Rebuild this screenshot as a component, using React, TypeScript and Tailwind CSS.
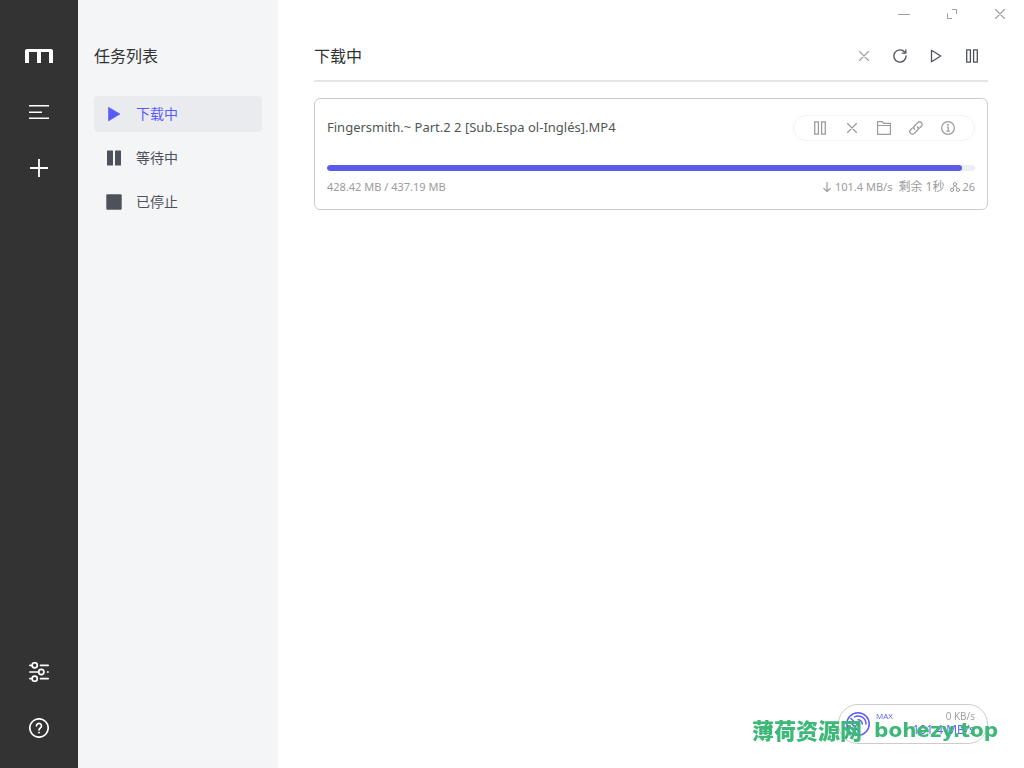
import React, { useState } from 'react'
import clsx from 'clsx'

type IconProps = { className?: string }

const stroke = {
  fill: 'none',
  stroke: 'currentColor',
  strokeLinecap: 'round' as const,
  strokeLinejoin: 'round' as const,
}

const LogoIcon = () => (
  <svg width="28" height="14" viewBox="0 0 28 14" fill="currentColor">
    <path d="M2 0h24a2 2 0 0 1 2 2v12h-4V3h-8v11h-4V3H4v11H0V2a2 2 0 0 1 2-2z" />
  </svg>
)

const MenuIcon = () => (
  <svg width="20" height="16" viewBox="0 0 20 16" {...stroke} strokeWidth="1.5" strokeLinecap="butt">
    <path d="M0 1.700h20M0 8.200h13M0 14.300h20" />
  </svg>
)

const PlusIcon = () => (
  <svg width="18" height="18" viewBox="0 0 18 18" {...stroke} strokeWidth="1.8" strokeLinecap="butt">
    <path d="M9 0v18M0 9h18" />
  </svg>
)

const SettingsIcon = () => (
  <svg width="20" height="20" viewBox="0 0 20 20" {...stroke} strokeWidth="1.700">
    <path d="M.8 3.300h2M11.500 3.300h7.700M.8 10h8.400M18.500 10h.7M.8 16.700h2M11.500 16.700h7.700" />
    <circle cx="5.700" cy="3.300" r="2.600" />
    <circle cx="12.300" cy="10" r="2.600" />
    <circle cx="5.700" cy="16.700" r="2.600" />
  </svg>
)

const HelpIcon = () => (
  <svg width="20" height="20" viewBox="0 0 20 20" {...stroke} strokeWidth="1.700">
    <circle cx="10" cy="10" r="9.200" />
    <path d="M7.500 7.800a2.500 2.500 0 1 1 3.900 2.100c-.9.600-1.400.9-1.400 2" />
    <circle cx="10" cy="14.600" r=".6" fill="currentColor" strokeWidth=".8" />
  </svg>
)

const PlayFill = () => (
  <svg width="16" height="16" viewBox="0 0 16 16" fill="currentColor">
    <path d="M2.500 1.200 14 8 2.500 14.900z" stroke="currentColor" strokeWidth=".6" strokeLinejoin="round" />
  </svg>
)

const PauseFill = () => (
  <svg width="16" height="16" viewBox="0 0 16 16" fill="currentColor">
    <rect x="1" y=".5" width="6" height="15" rx=".6" />
    <rect x="9" y=".5" width="6" height="15" rx=".6" />
  </svg>
)

const StopFill = () => (
  <svg width="16" height="16" viewBox="0 0 16 16" fill="currentColor">
    <rect x=".3" y=".3" width="15.400" height="15.400" rx="1" />
  </svg>
)

const CloseIcon = ({ className }: IconProps) => (
  <svg width="10" height="10" viewBox="0 0 10 10" {...stroke} strokeWidth="1.200" className={className}>
    <path d="M.5.5l9 9M9.500.5l-9 9" />
  </svg>
)

const MinimizeIcon = () => (
  <svg width="12" height="10" viewBox="0 0 12 10" {...stroke} strokeLinecap="butt">
    <path d="M0 5.500h12" />
  </svg>
)

const MaximizeIcon = () => (
  <svg width="10" height="10" viewBox="0 0 10 10" {...stroke} strokeLinecap="butt">
    <path d="M5 .5h4.500V5M.5 4.500v5H5" />
  </svg>
)

const RefreshIcon = () => (
  <svg width="14" height="14" viewBox="0 0 14 14" {...stroke} strokeWidth="1.300">
    <path d="M11.600 3A6.100 6.100 0 1 0 13.100 7" />
    <path d="M12.800.8v3.400H9.400" />
  </svg>
)

const PlayIcon = () => (
  <svg width="12" height="14" viewBox="0 0 12 14" {...stroke} strokeWidth="1.300">
    <path d="M1.500 1.300 10.700 7l-9.200 5.700z" />
  </svg>
)

const PauseIcon = () => (
  <svg width="12" height="14" viewBox="0 0 12 14" {...stroke} strokeWidth="1.300" strokeLinejoin="miter">
    <path d="M.7.9h3.700v12.200H.7zM7.600.9h3.700v12.200H7.600z" />
  </svg>
)

const FolderIcon = () => (
  <svg width="14" height="14" viewBox="0 0 14 14" {...stroke} strokeWidth="1.200">
    <path d="M.6 13.400V.6h4.600l1.200 1.800h7v11zM.6 4.500h12.800" />
  </svg>
)

const LinkIcon = () => (
  <svg width="14" height="14" viewBox="0 0 14 14" {...stroke} strokeWidth="1.300">
    <path d="M5.500 8.300a2.500 2.500 0 0 1 .1-3.500L8.800 1.600a2.500 2.500 0 0 1 3.600 3.600L10.500 7.100" />
    <path d="M8.500 5.700a2.500 2.500 0 0 1-.1 3.500L5.200 12.400a2.500 2.500 0 0 1-3.600-3.600L3.500 6.900" />
  </svg>
)

const InfoIcon = () => (
  <svg width="14" height="14" viewBox="0 0 14 14" {...stroke} strokeWidth="1.200">
    <circle cx="7" cy="7" r="6.400" />
    <path d="M6.200 6h1v4M6 10.200h2.300" />
    <circle cx="7" cy="3.700" r=".4" fill="currentColor" />
  </svg>
)

const DownArrow = () => (
  <svg width="8" height="10" viewBox="0 0 8 10" {...stroke} strokeWidth="1.200">
    <path d="M4 .5v9M.8 6.300 4 9.500l3.200-3.200" />
  </svg>
)

const NodeIcon = () => (
  <svg width="10" height="10" viewBox="0 0 10 10" {...stroke}>
    <circle cx="5" cy="2.200" r="1.600" />
    <circle cx="2.100" cy="7.900" r="1.600" />
    <circle cx="7.900" cy="7.900" r="1.600" />
    <path d="M4.400 3.800 2.900 6.300M5.600 3.800l1.500 2.500" />
  </svg>
)

const SpeedIcon = () => (
  <svg width="24" height="24" viewBox="0 0 24 24" {...stroke} strokeWidth="1.500">
    <circle cx="12" cy="12" r="11.200" />
    <path d="M8.500 4.800A8 8 0 0 1 20 12" />
    <path d="M12 7.800A4.300 4.300 0 0 1 16.300 12" />
    <path d="M5 6.500 13 14.500M3.800 9.500l8 9M3.800 14.500l4.500 5" />
  </svg>
)

const navItems = [
  { key: 'active', label: '下载中', icon: PlayFill },
  { key: 'waiting', label: '等待中', icon: PauseFill },
  { key: 'stopped', label: '已停止', icon: StopFill },
]

const taskActions = [
  { title: '暂停任务', icon: PauseIcon },
  { title: '删除任务', icon: CloseIcon },
  { title: '打开文件夹', icon: FolderIcon },
  { title: '复制链接', icon: LinkIcon },
  { title: '任务详情', icon: InfoIcon },
]

const task = {
  name: 'Fingersmith.~ Part.2 2 [Sub.Espa ol-Inglés].MP4',
  completed: 428.42,
  total: 437.19,
}

const SideBar = () => (
  <aside className="flex w-[78px] shrink-0 flex-col items-center justify-between bg-[#333] pt-9 pb-5 text-white">
    <div className="flex flex-col gap-4">
      <a href="#" title="Home" className="flex size-10 items-center justify-center"><LogoIcon /></a>
      <button title="任务列表" className="flex size-10 items-center justify-center"><MenuIcon /></button>
      <button title="新建任务" className="flex size-10 items-center justify-center"><PlusIcon /></button>
    </div>
    <div className="flex flex-col gap-4">
      <button title="设置" className="flex size-10 items-center justify-center"><SettingsIcon /></button>
      <button title="帮助" className="flex size-10 items-center justify-center"><HelpIcon /></button>
    </div>
  </aside>
)

const TaskItem = () => {
  const percent = (task.completed / task.total) * 100

  return (
    <article className="rounded-md border border-[#ccc] p-3">
      <div className="flex h-[34px] items-center justify-between">
        <h2 className="truncate font-['Noto_Sans'] text-[13px] text-[#505753]">{task.name}</h2>
        <div className="flex h-[26px] shrink-0 items-center rounded-full border border-[#f3f3f3] px-2.5 text-[#9b9b9b]">
          {taskActions.map(({ title, icon: Icon }) => (
            <button key={title} title={title} className="flex h-6 w-8 items-center justify-center">
              <Icon />
            </button>
          ))}
        </div>
      </div>
      <div className="mt-5 h-1.5 overflow-hidden rounded-full bg-[#ebeef5]">
        <div className="h-full rounded-full bg-[#5b5bea]" style={{ width: `${percent}%` }} />
      </div>
      <div className="mt-1.5 flex h-5 items-center justify-between font-['Noto_Sans','Noto_Sans_CJK_SC',sans-serif] text-[11px] text-[#9b9b9b]">
        <span>{task.completed} MB / {task.total} MB</span>
        <div className="flex items-center gap-1.5">
          <span className="flex items-center gap-1"><DownArrow />101.4 MB/s</span>
          <span className="text-xs">剩余 1秒</span>
          <span className="flex items-center gap-0.5"><NodeIcon />26</span>
        </div>
      </div>
    </article>
  )
}

const Speedometer = () => (
  <div className="fixed right-9 bottom-6 flex h-10 w-[150px] items-center justify-between rounded-full border border-[#ccc] bg-white pr-3 pl-[7px]">
    <div className="flex gap-1.5 text-[#5b5bfa]">
      <SpeedIcon />
      <span className="text-[8px] leading-2">MAX</span>
    </div>
    <div className="flex flex-col items-end">
      <span className="text-[10px] leading-3 text-[#9b9b9b]">0 KB/s</span>
      <span className="text-xs leading-4 text-[#5b5bfa]">101.4 MB/s</span>
    </div>
  </div>
)

const App: React.FC = () => {
  const [current, setCurrent] = useState('active')
  const currentItem = navItems.find((item) => item.key === current)

  return (
    <div className="flex min-h-screen bg-white font-['Open_Sans','Noto_Sans_CJK_SC',sans-serif] text-[#303133]">
      <SideBar />

      <nav className="w-[200px] shrink-0 bg-[#f4f5f7] px-4 pt-11">
        <h1 className="text-base leading-6">任务列表</h1>
        <ul className="mt-7 flex flex-col gap-2">
          {navItems.map(({ key, label, icon: Icon }) => (
            <li key={key}>
              <button
                onClick={() => setCurrent(key)}
                className={clsx(
                  'flex h-9 w-full items-center gap-3.5 rounded-sm px-3 text-sm',
                  key === current ? 'bg-[#eaebef] text-[#5b5bfa]' : 'text-[#4d515a]'
                )}
              >
                <Icon />
                {label}
              </button>
            </li>
          ))}
        </ul>
      </nav>

      <main className="min-w-0 flex-1">
        <div className="flex h-7 justify-end text-[#a0a0a0]">
          <button title="最小化" className="flex w-12 items-center justify-center"><MinimizeIcon /></button>
          <button title="最大化" className="flex w-12 items-center justify-center"><MaximizeIcon /></button>
          <button title="关闭" className="flex w-12 items-center justify-center"><CloseIcon /></button>
        </div>
        <div className="px-9">
          <header className="flex h-[54px] items-center justify-between border-b-2 border-[#e5e5e5] pt-1">
            <h2 className="text-base">{currentItem?.label}</h2>
            <div className="flex gap-1 text-[#4d515a]">
              <button title="删除任务" className="flex size-8 items-center justify-center"><CloseIcon className="text-[#a0a0a0]" /></button>
              <button title="刷新列表" className="flex size-8 items-center justify-center"><RefreshIcon /></button>
              <button title="恢复所有任务" className="flex size-8 items-center justify-center"><PlayIcon /></button>
              <button title="暂停所有任务" className="flex size-8 items-center justify-center"><PauseIcon /></button>
            </div>
          </header>
          <div className="mt-4">
            <TaskItem />
          </div>
        </div>
      </main>

      <Speedometer />
      <p className="pointer-events-none fixed right-[26px] bottom-6 flex items-center gap-3 leading-7 font-black text-[#3cb878]">
        <span className="text-[22px]">薄荷资源网</span>
        <span className="font-['DejaVu_Sans'] text-xl font-bold">bohezy.top</span>
      </p>
    </div>
  )
}

export default App
